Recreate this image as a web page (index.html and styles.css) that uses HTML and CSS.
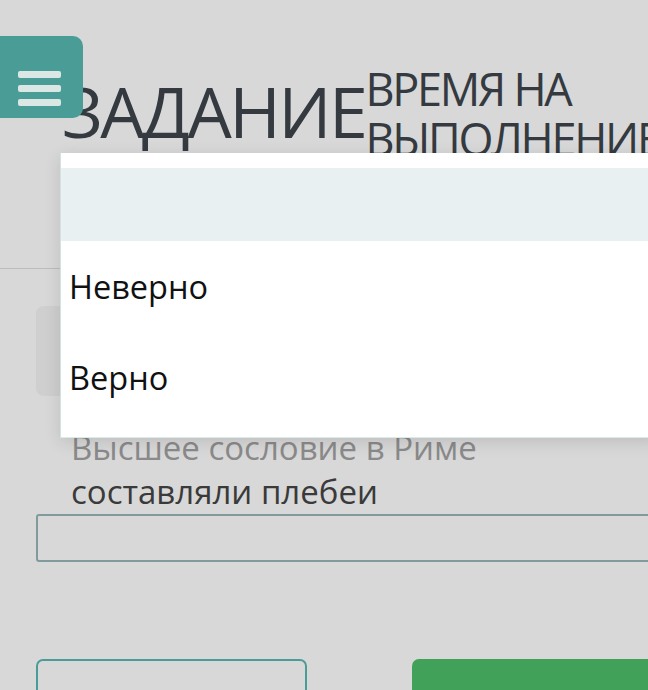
FILE: index.html
```html
<!DOCTYPE html>
<html lang="ru">
<head>
    <meta charset="UTF-8">
    <meta name="viewport" content="width=device-width, initial-scale=1.0">
    <title>Задание</title>
    <link rel="stylesheet" href="styles.css">
</head>
<body>
    <div class="page">
        <header class="task-header">
            <button class="menu-btn" aria-label="Меню">
                <svg width="43" height="35" viewBox="0 0 43 35">
                    <rect x="0" y="0" width="43" height="7" rx="2"/>
                    <rect x="0" y="14" width="43" height="7" rx="2"/>
                    <rect x="0" y="28" width="43" height="7" rx="2"/>
                </svg>
            </button>
            <h1 class="task-title">ЗАДАНИЕ</h1>
            <div class="task-time">ВРЕМЯ НА<br>ВЫПОЛНЕНИЕ</div>
            <button class="side-btn" aria-label="Таймер"></button>
        </header>

        <hr class="divider">

        <main class="question">
            <div class="q-number"></div>
            <p class="q-text">
                <span class="q-faded">Высшее сословие в Риме</span><br>
                составляли плебеи
            </p>
            <div class="answer-select"></div>
        </main>

        <div class="nav-buttons">
            <button class="btn btn-outline"></button>
            <button class="btn btn-green"></button>
        </div>

        <!-- открытый выпадающий список -->
        <div class="dropdown">
            <div class="dropdown-empty"></div>
            <div class="dropdown-item">Неверно</div>
            <div class="dropdown-item">Верно</div>
        </div>
    </div>
</body>
</html>
```

FILE: styles.css
```css
:root {
    --teal: #4a9d97;
    --green: #41a158;
    --bg: #d8d8d8;
    --text: #343a40;
}

* {
    margin: 0;
    padding: 0;
    box-sizing: border-box;
}

body {
    font-family: 'Open Sans', 'Noto Sans', sans-serif;
    background-color: var(--bg);
    color: var(--text);
    overflow: hidden;
}

.page {
    position: relative;
    width: 648px;
    height: 690px;
    overflow: hidden;
}

.task-header {
    display: flex;
    align-items: flex-start;
    padding-top: 36px;
    height: 268px;
}

.menu-btn {
    position: relative;
    z-index: 2;
    flex: none;
    width: 93px;
    height: 82px;
    margin-left: -10px;
    padding: 23px 0 0 28px;
    border: none;
    border-radius: 10px;
    background-color: var(--teal);
    text-align: left;
}

.menu-btn svg {
    display: block;
    fill: #dbe7e5;
}

.task-title {
    flex: none;
    margin: 40px 0 0 -21px;
    font-size: 70px;
    font-weight: 400;
    line-height: 1;
    letter-spacing: -2.5px;
}

.task-time {
    flex: none;
    margin: 28px 0 0 0;
    font-size: 45px;
    line-height: 50px;
    letter-spacing: -2.3px;
}

.side-btn {
    flex: none;
    width: 60px;
    height: 82px;
    margin-left: auto;
    margin-right: -49px;
    border: none;
    border-radius: 10px;
    background-color: var(--teal);
}

.divider {
    border: none;
    border-top: 1px solid #bdbdbd;
}

.question {
    padding: 37px 0 0 36px;
}

.q-number {
    width: 120px;
    height: 90px;
    border-radius: 8px;
    background-color: #cfcfcf;
}

.q-text {
    margin: 30px 0 0 35px;
    font-size: 33px;
    line-height: 44px;
    color: #3a3a3a;
}

.q-faded {
    color: #8a8a8a;
}

.answer-select {
    height: 48px;
    margin-top: 0;
    margin-right: -10px;
    border: 2px solid #819b9d;
    border-radius: 3px;
}

.nav-buttons {
    display: flex;
    gap: 105px;
    padding: 97px 0 0 36px;
}

.btn {
    flex: none;
    height: 60px;
    border-radius: 7px;
}

.btn-outline {
    width: 271px;
    border: 2px solid var(--teal);
    background: transparent;
}

.btn-green {
    width: 260px;
    border: none;
    background-color: var(--green);
}

.dropdown {
    position: absolute;
    top: 153px;
    left: 60px;
    right: -10px;
    height: 285px;
    padding-top: 15px;
    background-color: #fff;
    border-left: 1px solid #d3e3e2;
    border-bottom: 1px solid #dcebea;
    box-shadow: 0 4px 16px rgba(0,0,0,0.12);
    z-index: 5;
}

.dropdown-empty {
    height: 73px;
    background-color: #e8f0f2;
}

.dropdown-item {
    display: flex;
    align-items: center;
    height: 91px;
    padding-left: 8px;
    font-size: 32.5px;
    color: #111;
}
```
